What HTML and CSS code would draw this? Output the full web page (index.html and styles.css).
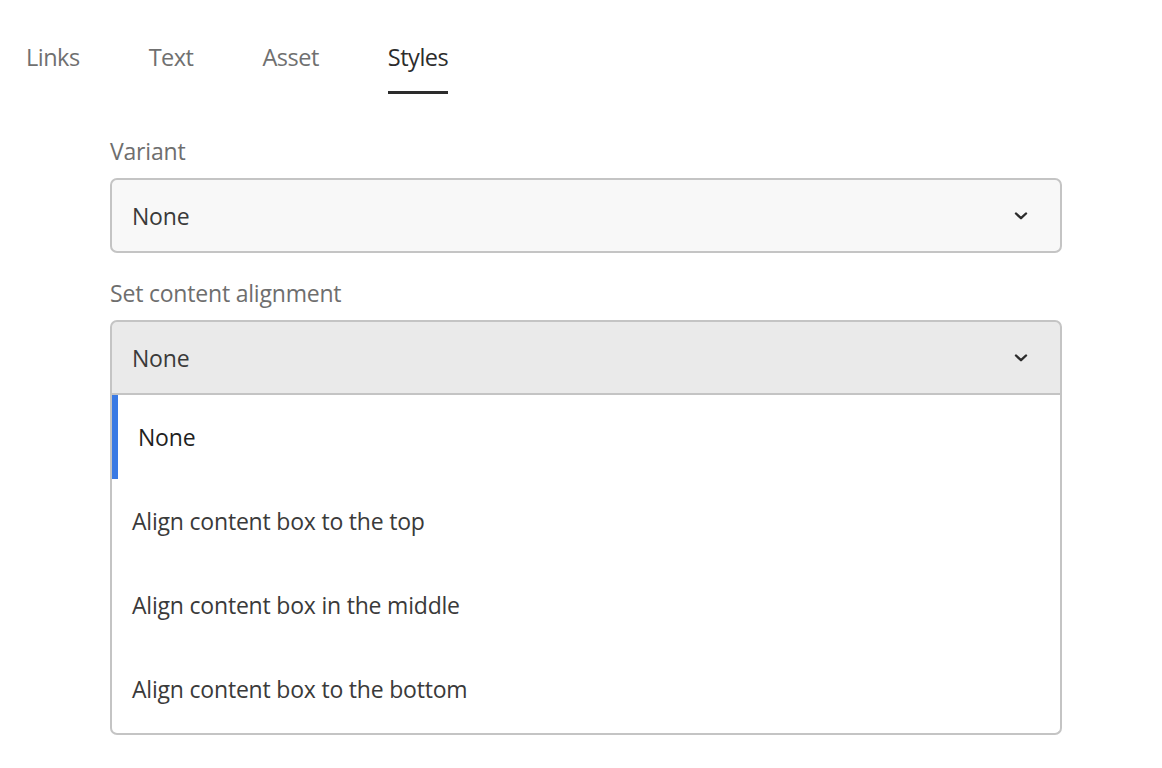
FILE: index.html
```html
<!DOCTYPE html>
<html>
<head>
<meta charset="utf-8">
<link rel="stylesheet" href="styles.css">
</head>
<body>
<div class="page">
  <nav class="tabs">
    <div class="tab">Links</div>
    <div class="tab">Text</div>
    <div class="tab">Asset</div>
    <div class="tab active">Styles</div>
  </nav>
  <div class="form">
    <div class="field">
      <div class="label">Variant</div>
      <div class="select">
        <span class="value">None</span>
        <svg class="chev" width="16" height="10" viewBox="0 0 16 10"><path d="M3 2.5 L8 7.2 L13 2.5" fill="none" stroke="#2c2c2c" stroke-width="2.4" stroke-linecap="round" stroke-linejoin="round"/></svg>
      </div>
    </div>
    <div class="field">
      <div class="label">Set content alignment</div>
      <div class="select open">
        <span class="value">None</span>
        <svg class="chev" width="16" height="10" viewBox="0 0 16 10"><path d="M3 2.5 L8 7.2 L13 2.5" fill="none" stroke="#2c2c2c" stroke-width="2.4" stroke-linecap="round" stroke-linejoin="round"/></svg>
      </div>
      <ul class="menu">
        <li class="item selected">None</li>
        <li class="item">Align content box to the top</li>
        <li class="item">Align content box in the middle</li>
        <li class="item">Align content box to the bottom</li>
      </ul>
    </div>
  </div>
</div>
</body>
</html>
```
FILE: styles.css
```css
html, body {
  margin: 0;
  padding: 0;
  background: #ffffff;
}
body {
  font-family: "Open Sans", "Lato", sans-serif;
  color: #2c2c2c;
}
.tabs {
  display: flex;
  gap: 69px;
  padding: 40px 0 0 26px;
  height: 54px;
  box-sizing: content-box;
}
.tab {
  font-size: 23.5px;
  color: #707070;
  line-height: 34px;
  height: 54px;
  box-sizing: border-box;
  letter-spacing: -0.5px;
}
.tab.active {
  color: #2c2c2c;
  border-bottom: 3px solid #2c2c2c;
}
.form {
  margin: 44px 0 0 110px;
  width: 952px;
}
.field {
  display: flex;
  flex-direction: column;
}
.label {
  font-size: 23px;
  color: #6e6e6e;
  line-height: 26px;
  margin-bottom: 14px;
  letter-spacing: -0.2px;
}
.select {
  display: flex;
  align-items: center;
  justify-content: space-between;
  height: 75px;
  box-sizing: border-box;
  border: 2px solid #c4c4c4;
  border-radius: 7px;
  background: #f8f8f8;
  padding: 0 31px 0 20px;
  font-size: 23px;
  color: #3a3a3a;
  letter-spacing: -0.2px;
}
.field + .field {
  margin-top: 27px;
}
.select.open {
  background: #eaeaea;
  border-radius: 7px 7px 0 0;
}
.chev {
  display: block;
}
.menu {
  list-style: none;
  margin: 0;
  padding: 0 0 2px;
  border: 2px solid #c4c4c4;
  border-top: none;
  border-radius: 0 0 7px 7px;
  background: #ffffff;
}
.item {
  height: 84px;
  display: flex;
  align-items: center;
  padding-left: 20px;
  font-size: 23px;
  color: #3a3a3a;
  letter-spacing: -0.2px;
}
.item.selected {
  border-left: 6px solid #3a7ae4;
  padding-left: 20px;
  color: #1f1f1f;
}
```
